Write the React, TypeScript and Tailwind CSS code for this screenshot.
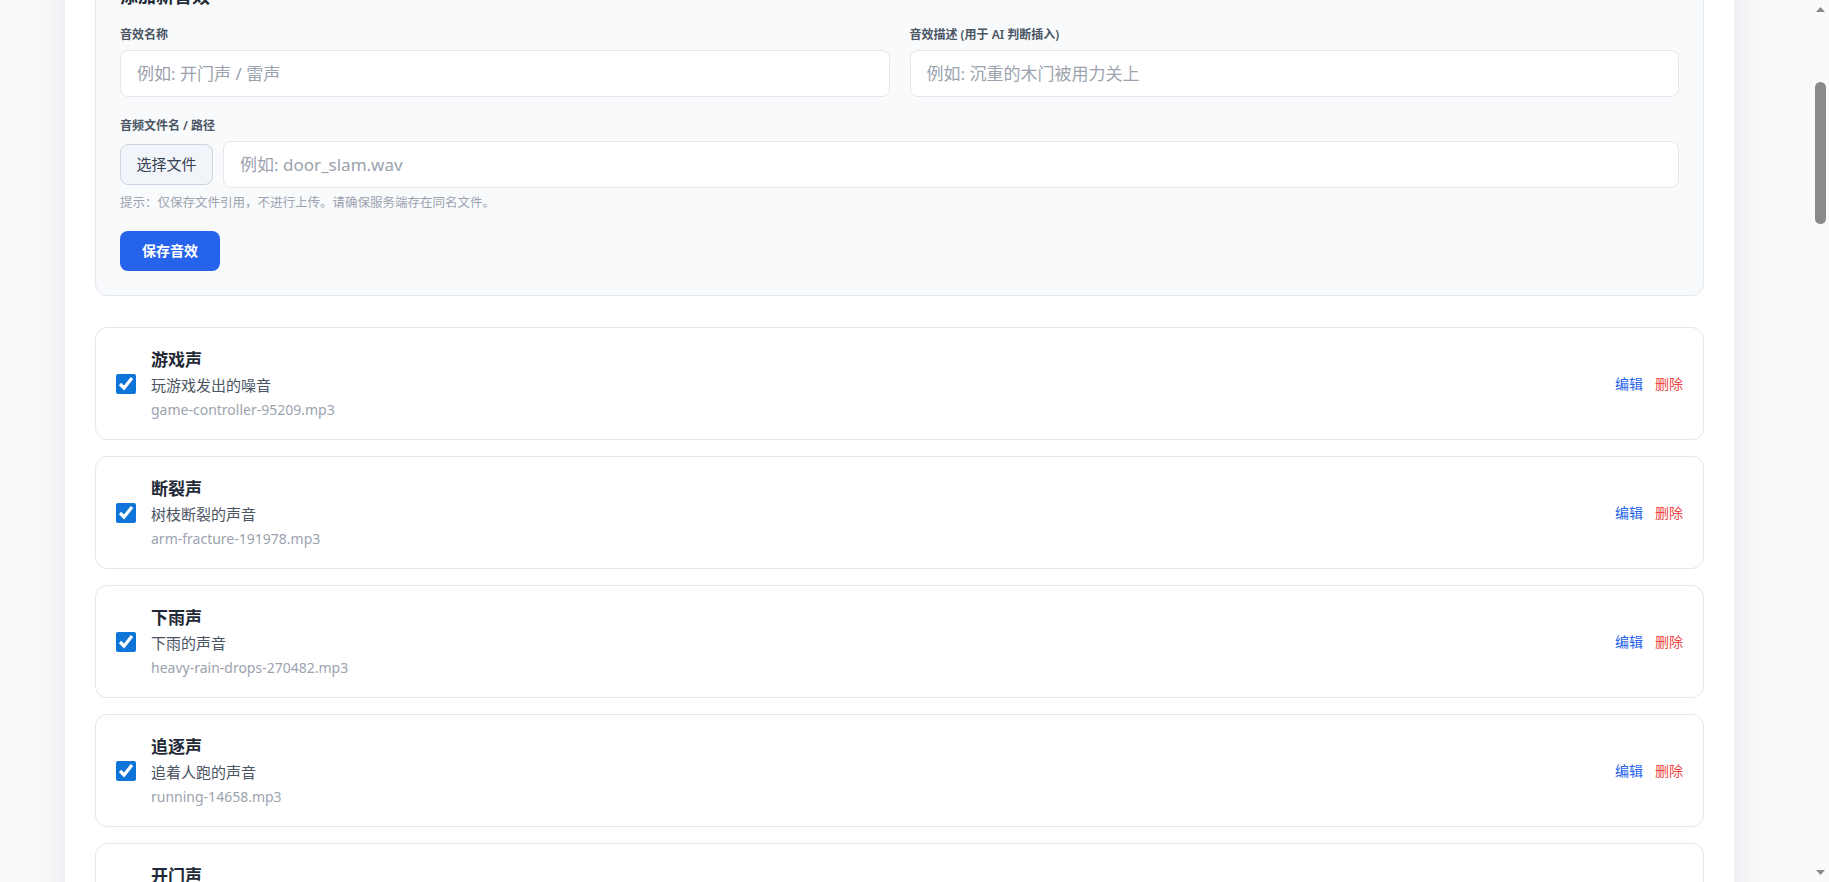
import { useLayoutEffect, useRef } from "react"

type Sound = { name: string; desc: string; file: string }

const sounds: Sound[] = [
    { name: "游戏声", desc: "玩游戏发出的噪音", file: "game-controller-95209.mp3" },
    { name: "断裂声", desc: "树枝断裂的声音", file: "arm-fracture-191978.mp3" },
    { name: "下雨声", desc: "下雨的声音", file: "heavy-rain-drops-270482.mp3" },
    { name: "追逐声", desc: "追着人跑的声音", file: "running-14658.mp3" },
    { name: "开门声", desc: "推开房门的声音", file: "door-open.mp3" },
]

function Field({ label, placeholder }: { label: string; placeholder: string }) {
    return (
        <div className="flex flex-col">
            <label className="mb-[6px] text-xs leading-[18px] font-semibold text-[#4b5563]">{label}</label>
            <input
                placeholder={placeholder}
                className="h-[47px] w-full rounded-lg border border-[#e5e7eb] bg-white px-4 text-[17px] text-[#1f2937] outline-none placeholder:text-[#9ca3af]"
            />
        </div>
    )
}

function SoundRow({ sound }: { sound: Sound }) {
    return (
        <div className="flex items-center rounded-xl border border-[#e2e8f0] bg-white py-[19px] pr-5 pl-5">
            <input type="checkbox" defaultChecked className="h-5 w-5 shrink-0 accent-[#0f74d8]" />
            <div className="ml-[15px] flex min-w-0 flex-1 flex-col">
                <span className="text-[17px] leading-[26px] font-bold text-[#1f2937]">{sound.name}</span>
                <span className="text-[15px] leading-[24px] text-[#4b5563]">{sound.desc}</span>
                <span className="mt-[2px] text-sm leading-[21px] text-[#9ca3af]">{sound.file}</span>
            </div>
            <div className="flex items-center gap-3 text-sm">
                <button className="text-[#2563eb]">编辑</button>
                <button className="text-[#ef4444]">删除</button>
            </div>
        </div>
    )
}

// the browser's own scrollbar is hidden here, so draw the one the page shows
function FakeScrollbar() {
    return (
        <div className="fixed top-0 right-0 flex h-screen w-[17px] flex-col items-center bg-[#fafafa]">
            <svg width="9" height="5" viewBox="0 0 9 5" className="mt-[7px]">
                <path d="M0 5 L4.5 0 L9 5 Z" fill="#8a8a8a" />
            </svg>
            <div className="mt-[70px] h-[142px] w-[11px] rounded-full bg-[#8a8a8a]" />
            <div className="flex-1" />
            <svg width="9" height="5" viewBox="0 0 9 5" className="mb-[7px]">
                <path d="M0 0 L4.5 5 L9 0 Z" fill="#8a8a8a" />
            </svg>
        </div>
    )
}

export default function App() {
    const scroller = useRef<HTMLDivElement>(null)

    useLayoutEffect(() => {
        if (scroller.current) scroller.current.scrollTop = 336
    }, [])

    return (
        <>
            <div ref={scroller} className="h-screen overflow-y-auto bg-[#f8f9fb] font-['Noto_Sans','Noto_Sans_CJK_SC',sans-serif]">
                <div className="pt-8 pb-10">
                    <div className="ml-[65px] w-[1669px] bg-white px-[30px] pt-[30px] pb-10 shadow-[0_0_32px_rgba(15,23,42,0.07)]">
                        <div className="mb-8 flex h-[199px] flex-col justify-end border-b border-[#f1f5f9] pb-6">
                            <h1 className="text-2xl font-bold text-[#111827]">音效库</h1>
                            <p className="mt-2 text-sm text-[#6b7280]">管理可供 AI 在配音中插入的音效素材</p>
                        </div>

                        <div className="rounded-xl border border-[#e2e8f0] bg-[#f8fafc] p-6">
                            <h2 className="mb-4 text-lg leading-7 font-bold text-[#1f2937]">添加新音效</h2>
                            <div className="grid grid-cols-2 gap-5">
                                <Field label="音效名称" placeholder="例如: 开门声 / 雷声" />
                                <Field label="音效描述 (用于 AI 判断插入)" placeholder="例如: 沉重的木门被用力关上" />
                            </div>
                            <div className="mt-5 flex flex-col">
                                <label className="mb-[6px] text-xs leading-[18px] font-semibold text-[#4b5563]">音频文件名 / 路径</label>
                                <div className="flex items-center gap-2.5">
                                    <button className="h-[41px] w-[93px] shrink-0 rounded-lg border border-[#cbd5e1] bg-[#f1f5f9] text-[15px] text-[#374151]">
                                        选择文件
                                    </button>
                                    <input
                                        placeholder="例如: door_slam.wav"
                                        className="h-[47px] flex-1 rounded-lg border border-[#e5e7eb] bg-white px-4 text-[17px] text-[#1f2937] outline-none placeholder:text-[#9ca3af]"
                                    />
                                </div>
                                <p className="mt-[7px] text-[12.5px] leading-4 text-[#9ca3af]">
                                    提示：仅保存文件引用，不进行上传。请确保服务端存在同名文件。
                                </p>
                            </div>
                            <button className="mt-5 h-10 w-[100px] rounded-lg bg-[#2563eb] text-sm font-bold text-white">保存音效</button>
                        </div>

                        <div className="mt-[31px] flex flex-col gap-4">
                            {sounds.map((s) => (
                                <SoundRow key={s.name} sound={s} />
                            ))}
                        </div>
                    </div>
                </div>
            </div>
            <FakeScrollbar />
        </>
    )
}
